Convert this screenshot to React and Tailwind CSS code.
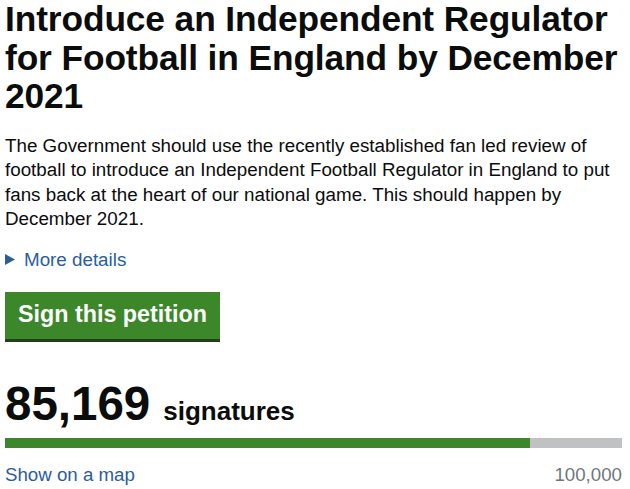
export default function App() {
  const count = 85169;
  const target = 100000;
  const pct = (count / target) * 100;

  return (
    <div className="min-h-screen bg-white pl-[5px] pr-[8px] text-[#0b0c0c] font-['Liberation_Sans',Arial,sans-serif]">
      {/* Title */}
      <h1 className="-mr-[8px] text-[35.3px] leading-[38.5px] font-bold tracking-[-0.1px]">
        Introduce an Independent Regulator for Football in England by December 2021
      </h1>

      {/* Summary */}
      <p className="mt-[18px] text-[18.8px] leading-[24.5px]">
        The Government should use the recently established fan led review of football to introduce an
        Independent Football Regulator in England to put fans back at the heart of our national game.
        This should happen by December 2021.
      </p>

      {/* Details toggle */}
      <div className="mt-[15px] flex items-center text-[18.8px] leading-[25px] text-[#2b5c9e]">
        <svg width="10" height="11" viewBox="0 0 10 11" className="mr-[9px]">
          <path d="M0 0 L10 5.5 L0 11 Z" fill="currentColor" />
        </svg>
        <span>More details</span>
      </div>

      {/* Sign button */}
      <button className="mt-[20px] h-[50px] px-[13px] bg-[#3b8729] border-b-[3px] border-[#23401a] text-white text-[23.3px] font-bold leading-none">
        Sign this petition
      </button>

      {/* Signature count */}
      <div className="mt-[38px] flex items-baseline">
        <span className="text-[47.5px] leading-[48px] font-bold">85,169</span>
        <span className="ml-[13px] text-[26px] font-bold">signatures</span>
      </div>

      {/* Progress bar */}
      <div className="mt-[7px] h-[10px] bg-[#bfc1c3]">
        <div className="h-full bg-[#3b8729]" style={{ width: `${pct}%` }} />
      </div>

      <div className="mt-[16px] flex justify-between text-[18.7px] leading-[22px]">
        <span className="text-[#2b5c9e]">Show on a map</span>
        <span className="text-[#6f777b]">100,000</span>
      </div>
    </div>
  );
}
